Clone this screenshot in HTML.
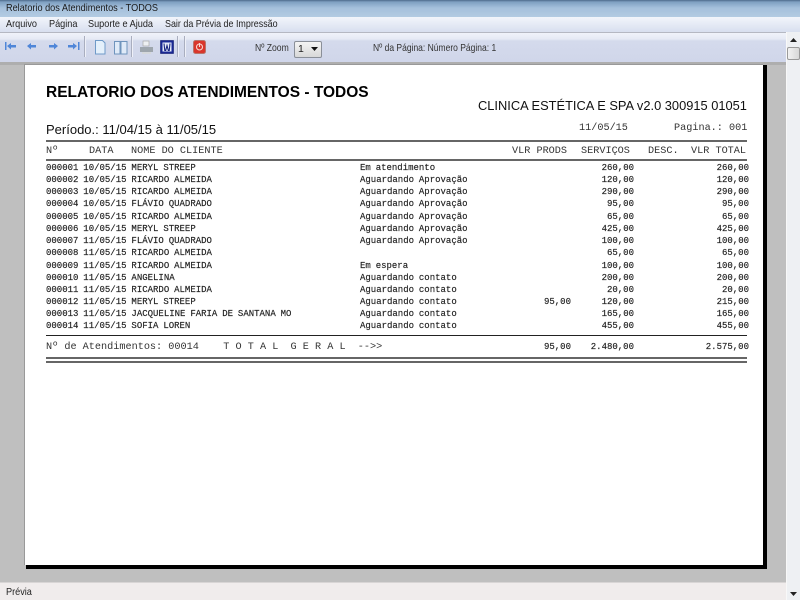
<!DOCTYPE html>
<html><head><meta charset="utf-8"><style>
html,body{margin:0;padding:0;width:800px;height:600px;overflow:hidden;background:#bfbfbf}
div,span,svg{position:absolute}
body{font-family:"Liberation Sans",sans-serif;color:#111}
.m{font-size:10.5px;top:18px;color:#222;white-space:nowrap;transform:scaleX(.87);transform-origin:0 0}
.r{font-family:"Liberation Mono",monospace;font-size:9px;word-spacing:-.5px;color:#222;white-space:pre;height:11px;line-height:11px;-webkit-text-stroke:.15px #222}
.h{font-family:"Liberation Mono",monospace;font-size:10.2px;color:#333;white-space:pre;line-height:12px}
.a{text-align:right;width:70px}
.l{background:#666;left:46px;width:701px}
.sep{width:1px;height:21px;top:36px;background:#a9aebf;border-right:1px solid #eef0f8}
</style></head><body>
<div style="left:0;top:0;width:800px;height:17px;background:linear-gradient(#4d6b8c 0,#7fa0c2 2px,#a5c0dc 8px,#b3cbe2 17px)"></div>
<div class="m" style="left:6px;top:2px;color:#1a1a1a">Relatorio dos Atendimentos - TODOS</div>
<div style="left:0;top:17px;width:800px;height:15px;background:linear-gradient(#f2f5fb,#d8dfef)"></div>
<div class="m" style="left:6px">Arquivo</div><div class="m" style="left:49px">Página</div><div class="m" style="left:88px">Suporte e Ajuda</div><div class="m" style="left:165px;transform:scaleX(.85)">Sair da Prévia de Impressão</div>
<div style="left:0;top:32px;width:786px;height:30px;background:linear-gradient(#f0f3fa 0,#e6eaf5 6px,#d4daec 8px,#d0d6ea 100%);border-top:1px solid #b5b8c2;box-sizing:border-box"></div>
<svg style="left:4px;top:41px" width="76" height="11" viewBox="0 0 76 11">
<g fill="#4f86d8"><rect x="1" y="1" width="1.5" height="8"/><path d="M3 5l4-3v2h5v2.500H7v2z"/><path d="M23 5l4-3v2h5v2.500h-5v2z"/><path d="M54 5l-4-3v2h-5v2.500h5v2z"/><path d="M73 5l-4-3v2h-5v2.500h5v2z"/><rect x="74" y="1" width="1.500" height="8"/></g></svg>
<div class="sep" style="left:84px"></div>
<svg style="left:94px;top:40px" width="34" height="15" viewBox="0 0 34 15">
<path d="M1.500.5h7l2.500 2.500v11H1.500z" fill="#e4f0fb" stroke="#6f9ac8"/>
<path d="M20.500 1.500h5.500v12.500h-5.500zM27 1.500h6v12.500h-6z" fill="#dfeaf8" stroke="#6f94bd"/></svg>
<div class="sep" style="left:131px"></div>
<svg style="left:139px;top:40px" width="15" height="15" viewBox="0 0 15 15">
<path d="M4 1h6v5H4z" fill="#eef0f2" stroke="#aaa" stroke-width=".7"/><path d="M1 7h13v5H1z" fill="#9ea6ad"/><path d="M3 12h9v2H3z" fill="#d5d8db"/></svg>
<svg style="left:160px;top:40px" width="14" height="14" viewBox="0 0 14 14">
<rect x=".7" y=".7" width="12.600" height="12.600" fill="#1c2c9c" stroke="#141e78"/><rect x="2.500" y="2.500" width="9" height="9" fill="#e8ecf8"/>
<path d="M4 3.500l.8 7h.9l1.300-5 1.300 5h.9l.8-7" fill="none" stroke="#16237f" stroke-width="1.100"/></svg>
<div class="sep" style="left:177px"></div><div class="sep" style="left:184px"></div>
<svg style="left:193px;top:40px" width="13" height="14" viewBox="0 0 13 14">
<rect x=".5" y=".5" width="12" height="13" rx="2" fill="#d9362c" stroke="#b8756b"/><circle cx="6.500" cy="7" r="3" fill="none" stroke="#f7d6cf" stroke-width="1.100"/><path d="M6.500 3v4" stroke="#f7d6cf" stroke-width="1.100"/></svg>
<div class="m" style="left:255px;top:42px;color:#333;transform:scaleX(.82)">Nº Zoom</div>
<div style="left:294px;top:41px;width:26px;height:15px;border:1px solid #8a8f98;border-radius:2px;background:linear-gradient(#f4f4f4,#d8d8d8)"></div>
<div style="left:298px;top:43px;font-size:10.5px;color:#222">1</div>
<svg style="left:311px;top:47px" width="7" height="4" viewBox="0 0 7 4"><path d="M0 0h7L3.500 4z" fill="#111"/></svg>
<div class="m" style="left:373px;top:42px;color:#333;transform:scaleX(.81)">Nº da Página: Número Página: 1</div>
<div style="left:0;top:62px;width:786px;height:3px;background:#aeaeae"></div>
<div style="left:786px;top:32px;width:14px;height:568px;background:#eef0f3;border-left:1px solid #f8f8f8;box-sizing:border-box"></div>
<svg style="left:790px;top:38px" width="7" height="4" viewBox="0 0 7 4"><path d="M3.500 0L7 4H0z" fill="#222"/></svg>
<div style="left:787px;top:47px;width:11px;height:11px;border:1px solid #9a9a9a;border-radius:2px;background:linear-gradient(90deg,#f2f2f2,#d8d8d8)"></div>
<svg style="left:790px;top:592px" width="7" height="4" viewBox="0 0 7 4"><path d="M0 0h7L3.500 4z" fill="#222"/></svg>
<div style="left:24px;top:64px;width:739px;height:501px;background:#fff;border-left:1px solid #999;border-top:1px solid #999;box-sizing:border-box"></div>
<div style="left:763px;top:65px;width:4px;height:504px;background:#000"></div>
<div style="left:26px;top:565px;width:741px;height:4px;background:#000"></div>
<div style="left:0;top:582px;width:786px;height:18px;background:#f0ecec;border-top:1px solid #d8d5d5;box-sizing:border-box"></div>
<div class="m" style="left:6px;top:586px">Prévia</div>

<div style="left:46px;top:84px;font-size:15.5px;font-weight:bold;color:#000;white-space:nowrap">RELATORIO DOS ATENDIMENTOS - TODOS</div>
<div style="left:478px;top:98px;font-size:12.85px;color:#111;white-space:nowrap">CLINICA ESTÉTICA E SPA v2.0 300915 01051</div>
<div style="left:46px;top:122px;font-size:13px;color:#111;white-space:nowrap">Período.: 11/04/15 à 11/05/15</div>
<div class="h" style="left:579px;top:123px">11/05/15</div>
<div class="h" style="left:674px;top:123px">Pagina.: 001</div>
<div class="l" style="top:140px;height:2px"></div>
<div class="l" style="top:159px;height:2px"></div>
<div class="h" style="left:46px;top:146px">Nº</div><div class="h" style="left:89px;top:146px">DATA</div><div class="h" style="left:131px;top:146px">NOME DO CLIENTE</div>
<div class="h" style="left:512px;top:146px">VLR PRODS</div><div class="h" style="left:581px;top:146px">SERVIÇOS</div><div class="h" style="left:648px;top:146px">DESC.</div><div class="h" style="left:691px;top:146px">VLR TOTAL</div>

<div class="r" style="left:46px;top:163px">000001 10/05/15 MERYL STREEP</div><div class="r" style="left:360px;top:163px">Em atendimento</div><div class="r a" style="left:564px;top:163px">260,00</div><div class="r a" style="left:679px;top:163px">260,00</div>
<div class="r" style="left:46px;top:175px">000002 10/05/15 RICARDO ALMEIDA</div><div class="r" style="left:360px;top:175px">Aguardando Aprovação</div><div class="r a" style="left:564px;top:175px">120,00</div><div class="r a" style="left:679px;top:175px">120,00</div>
<div class="r" style="left:46px;top:187px">000003 10/05/15 RICARDO ALMEIDA</div><div class="r" style="left:360px;top:187px">Aguardando Aprovação</div><div class="r a" style="left:564px;top:187px">290,00</div><div class="r a" style="left:679px;top:187px">290,00</div>
<div class="r" style="left:46px;top:199px">000004 10/05/15 FLÁVIO QUADRADO</div><div class="r" style="left:360px;top:199px">Aguardando Aprovação</div><div class="r a" style="left:564px;top:199px">95,00</div><div class="r a" style="left:679px;top:199px">95,00</div>
<div class="r" style="left:46px;top:212px">000005 10/05/15 RICARDO ALMEIDA</div><div class="r" style="left:360px;top:212px">Aguardando Aprovação</div><div class="r a" style="left:564px;top:212px">65,00</div><div class="r a" style="left:679px;top:212px">65,00</div>
<div class="r" style="left:46px;top:224px">000006 10/05/15 MERYL STREEP</div><div class="r" style="left:360px;top:224px">Aguardando Aprovação</div><div class="r a" style="left:564px;top:224px">425,00</div><div class="r a" style="left:679px;top:224px">425,00</div>
<div class="r" style="left:46px;top:236px">000007 11/05/15 FLÁVIO QUADRADO</div><div class="r" style="left:360px;top:236px">Aguardando Aprovação</div><div class="r a" style="left:564px;top:236px">100,00</div><div class="r a" style="left:679px;top:236px">100,00</div>
<div class="r" style="left:46px;top:248px">000008 11/05/15 RICARDO ALMEIDA</div><div class="r a" style="left:564px;top:248px">65,00</div><div class="r a" style="left:679px;top:248px">65,00</div>
<div class="r" style="left:46px;top:261px">000009 11/05/15 RICARDO ALMEIDA</div><div class="r" style="left:360px;top:261px">Em espera</div><div class="r a" style="left:564px;top:261px">100,00</div><div class="r a" style="left:679px;top:261px">100,00</div>
<div class="r" style="left:46px;top:273px">000010 11/05/15 ANGELINA</div><div class="r" style="left:360px;top:273px">Aguardando contato</div><div class="r a" style="left:564px;top:273px">200,00</div><div class="r a" style="left:679px;top:273px">200,00</div>
<div class="r" style="left:46px;top:285px">000011 11/05/15 RICARDO ALMEIDA</div><div class="r" style="left:360px;top:285px">Aguardando contato</div><div class="r a" style="left:564px;top:285px">20,00</div><div class="r a" style="left:679px;top:285px">20,00</div>
<div class="r" style="left:46px;top:297px">000012 11/05/15 MERYL STREEP</div><div class="r" style="left:360px;top:297px">Aguardando contato</div><div class="r a" style="left:501px;top:297px">95,00</div><div class="r a" style="left:564px;top:297px">120,00</div><div class="r a" style="left:679px;top:297px">215,00</div>
<div class="r" style="left:46px;top:309px">000013 11/05/15 JACQUELINE FARIA DE SANTANA MO</div><div class="r" style="left:360px;top:309px">Aguardando contato</div><div class="r a" style="left:564px;top:309px">165,00</div><div class="r a" style="left:679px;top:309px">165,00</div>
<div class="r" style="left:46px;top:321px">000014 11/05/15 SOFIA LOREN</div><div class="r" style="left:360px;top:321px">Aguardando contato</div><div class="r a" style="left:564px;top:321px">455,00</div><div class="r a" style="left:679px;top:321px">455,00</div>

<div style="left:46px;top:335px;width:701px;height:1px;background:#222"></div>
<div class="h" style="left:46px;top:342px">Nº de Atendimentos: 00014    T O T A L  G E R A L  --&gt;&gt;</div>
<div class="r a" style="left:501px;top:342px">95,00</div><div class="r a" style="left:564px;top:342px">2.480,00</div><div class="r a" style="left:679px;top:342px">2.575,00</div>
<div class="l" style="top:357px;height:2px"></div>
<div class="l" style="top:361px;height:1.500px"></div>
</body></html>
